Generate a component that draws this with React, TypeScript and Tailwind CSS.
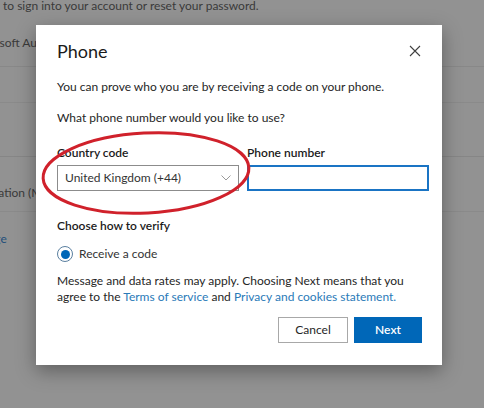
import React from "react";

export default function App() {
  return (
    <div className="relative w-[484px] h-[408px] overflow-hidden bg-[#929292] font-['Lato',sans-serif] text-[#3a3a3a]">
      {/* background page */}
      <div className="flex flex-col text-[12px]">
        <p className="h-[25px] leading-[12px] pl-[3px] whitespace-nowrap">to sign into your account or reset your password.</p>
        <div className="h-[42px] border-b border-[#888888] pt-[8px] leading-[20px] whitespace-nowrap -ml-[31px]">Microsoft Authenticator</div>
        <div className="h-[36px] border-b border-[#8a8a8a]"></div>
        <div className="h-[54px] border-b border-[#868686]"></div>
        <div className="h-[55px] border-b border-[#8a8a8a] pt-[26px] leading-[20px] whitespace-nowrap -ml-[118px]">Multi-factor authentication (MFA)</div>
        <div className="pt-[17px] leading-[20px] whitespace-nowrap text-[#1f4e7a] -ml-[33px]">Change</div>
      </div>

      {/* modal */}
      <div className="absolute left-[36px] top-[25px] w-[406px] h-[340px] bg-white shadow-[0_6px_18px_rgba(0,0,0,0.35)] pl-[21px] pr-[12px] pt-[12px] text-[#262626] text-[12px]">
        <div className="flex items-center justify-between pr-[8px]">
          <h1 className="text-[18px] leading-[28px] text-[#1b1b1b]">Phone</h1>
          <svg width="12" height="12" viewBox="0 0 12 12" className="mr-[1px]">
            <path d="M1 1 L11 11 M11 1 L1 11" stroke="#404040" strokeWidth="1.1" fill="none" />
          </svg>
        </div>
        <p className="mt-[12px] leading-[20px]">You can prove who you are by receiving a code on your phone.</p>
        <p className="mt-[11px] leading-[20px]">What phone number would you like to use?</p>
        <div className="mt-[15px] flex gap-[8px]">
          <div className="flex flex-col gap-[2px] w-[182px]">
            <label className="leading-[20px] font-semibold text-[#1b1b1b]">Country code</label>
            <div className="h-[26px] border border-[#8c8c8c] flex items-center justify-between pl-[7px] pr-[7px] text-[#333]">
              <span>United Kingdom (+44)</span>
              <svg width="10" height="6" viewBox="0 0 10 6">
                <path d="M0.5 0.5 L5 5 L9.5 0.5" stroke="#9a9a9a" strokeWidth="1" fill="none" />
              </svg>
            </div>
          </div>
          <div className="flex flex-col gap-[2px] w-[182px]">
            <label className="leading-[20px] font-semibold text-[#1b1b1b]">Phone number</label>
            <div className="h-[26px] border-2 border-[#1a74c4]"></div>
          </div>
        </div>
        <p className="mt-[25px] leading-[20px] font-semibold text-[#1b1b1b]">Choose how to verify</p>
        <div className="mt-[8px] flex items-center gap-[6px] h-[20px]">
          <span className="w-[16px] h-[16px] rounded-full border border-[#5a7fa0] flex items-center justify-center">
            <span className="w-[9px] h-[9px] rounded-full bg-[#0067b8]"></span>
          </span>
          <span className="leading-[20px] text-[#333]">Receive a code</span>
        </div>
        <p className="mt-[9px] leading-[16px]">
          Message and data rates may apply. Choosing Next means that you
          <br />
          agree to the <span className="text-[#2a7ab8]">Terms of service</span> and{" "}
          <span className="text-[#2a7ab8]">Privacy and cookies statement.</span>
        </p>
        <div className="mt-[12px] flex justify-end gap-[6px] pr-[8px]">
          <button className="w-[70px] h-[26px] border border-[#a8a8a8] bg-white text-[#262626] text-[12px]">Cancel</button>
          <button className="w-[68px] h-[26px] bg-[#0067b8] text-white font-semibold text-[12px]">Next</button>
        </div>
      </div>

      {/* red annotation ellipse */}
      <svg className="absolute left-0 top-0 pointer-events-none" width="484" height="408" viewBox="0 0 484 408">
        <ellipse cx="146" cy="173" rx="103" ry="40" transform="rotate(-3 146 173)" stroke="#d0212b" strokeWidth="3" fill="none" />
      </svg>
    </div>
  );
}
